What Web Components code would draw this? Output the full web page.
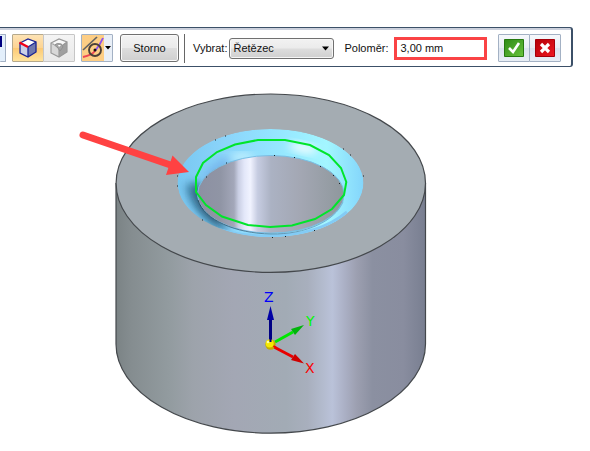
<!DOCTYPE html>
<html lang="cs">
<head>
<meta charset="utf-8">
<title>Zaoblení</title>
<style>
body{margin:0;background:#fff;font:11px "Liberation Sans",Arial,sans-serif;color:#111}
</style>
</head>
<body>
<cad-app></cad-app>
<script>
function define(name, html) {
  const t = document.createElement('template');
  t.innerHTML = html;
  customElements.define(name, class extends HTMLElement {
    constructor() {
      super();
      this.attachShadow({mode: 'open'}).append(t.content.cloneNode(true));
    }
  });
}

customElements.define('tool-button', class extends HTMLElement {
  connectedCallback() {
    if (this.shadowRoot) return;
    this.attachShadow({mode: 'open'}).innerHTML = `
    <style>
    :host{display:block;flex:none}
    button{box-sizing:border-box;width:32px;height:28px;padding:0;display:flex;align-items:center;justify-content:center;
      border:1px solid #a3b1c4;border-radius:1px;background:linear-gradient(#f6f8fb,#e9eef5 50%,#dce4ee 52%,#e8eef5);font:inherit;color:inherit}
    :host([kind=active]) button{border-color:#b5a98c;background:linear-gradient(#fde3b5,#fdd493 48%,#fcca76 52%,#ffe49e)}
    :host([kind=off]) button{border-color:#c6c6c6;background:linear-gradient(#f4f4f4,#e9e9e9)}
    :host([kind=split]) button{background:linear-gradient(90deg,#fdce85 22px,#e9eff7 22px)}
    :host([kind=cut]) button{width:6px;border-left:0;overflow:hidden;background:#e3effb;justify-content:flex-start;align-items:flex-start}
    :host([kind=text]) button{width:59px;border:1px solid #707070;border-radius:3px;box-shadow:inset 0 0 0 1px #fafafa;background:linear-gradient(#f3f3f3,#ebebeb 48%,#dddddd 52%,#cfcfcf)}
    </style><button type="button"><slot></slot></button>`;
    const label = this.getAttribute('label');
    if (label) this.shadowRoot.querySelector('button').setAttribute('aria-label', label);
  }
});

define('pick-list', `
<style>
:host{display:flex;align-items:center;gap:2px;flex:none}
.box{position:relative;display:block}
select{appearance:none;box-sizing:border-box;display:block;width:105px;height:21px;margin:0;padding:0 16px 0 3px;border:1px solid #707070;border-radius:3px;
 background:linear-gradient(#f2f2f2,#ebebeb 48%,#dddddd 52%,#cfcfcf);box-shadow:inset 0 0 0 1px #f6f6f6;font:inherit;color:inherit}
svg{position:absolute;right:5px;top:8px;pointer-events:none}
</style>
<label for="s">Vybrat:</label>
<span class="box"><select id="s"><option>Řetězec</option></select>
<svg width="7" height="5"><path d="M0 0.5h7L3.5 4.5z" fill="#000"/></svg></span>`);

define('radius-field', `
<style>
:host{display:flex;align-items:center;gap:6px;flex:none}
input{box-sizing:border-box;width:93px;height:23px;margin:0;padding:0 3px;border:3px solid #fa4345;background:#fff;font:inherit;color:inherit}
</style>
<label for="r">Poloměr:</label><input id="r" type="text" value="3,00 mm">`);

define('command-bar', `
<style>
:host{display:flex;align-items:center;box-sizing:border-box;height:40px;margin:27px 17px 0 0;padding-top:2px;
 border:solid #3c5068;border-width:1px 2px 1px 0;border-radius:0 3px 3px 0;background:linear-gradient(#cbd0dc 2px,#fff 2px)}
.group{display:flex;margin-left:6px}
.group + .group{margin-left:6px}
.storno{margin-left:7px}
hr{width:1px;height:29px;border:0;margin:0 8px 0 5px;background:#666;flex:none}
radius-field{margin-left:10px}
.end{margin-left:auto;margin-right:10px}
.group tool-button + tool-button{margin-left:-1px}
</style>
<tool-button kind="cut" label="Předchozí krok"><svg width="2" height="12"><path d="M0 1h2v11H0z" fill="#000080"/></svg></tool-button>
<div class="group">
<tool-button kind="active" label="Výběr hran"><svg width="20" height="22" viewBox="0 0 20 22">
 <path d="M2 6 10 2l8 3-7 5z" fill="#fff"/><path d="M2 6v10l8 4V10z" fill="#cbd1e8"/><path d="M10 10l8-5v10l-8 5z" fill="#7079ae"/>
 <path d="M2 6l8-4 8 3v10l-8 5-8-4zM10 10v10M10 10l8-5" fill="none" stroke="#1a2494" stroke-width="1.3"/><path d="M1.500 5.500 10 10" stroke="#f00018" stroke-width="2.400"/></svg></tool-button>
<tool-button kind="off" label="Parametry zaoblení"><svg width="20" height="22" viewBox="0 0 20 22">
 <path d="M2 6l8-4 8 3-7 5z" fill="#f8f8f8"/><path d="M2 6v10l8 4V10z" fill="#d8d8d8"/><path d="M10 10l8-5v10l-8 5z" fill="#a0a0a0"/>
 <path d="M2 6l8-4 8 3v10l-8 5-8-4zM10 12v8M14 8l4-3M2 6l3 1.500" fill="none" stroke="#999" stroke-width="1.200"/><path d="M5.500 8q2-2.500 7-1l1.500 3-3 4-2-3z" fill="#a4a4a4" stroke="#909090"/><path d="M9 8h3l-2 2z" fill="#fff"/></svg></tool-button>
</div>
<div class="group">
<tool-button kind="split" label="Tečné hrany"><svg width="30" height="26" viewBox="0 0 30 26">
 <path d="M1 15 15 2" stroke="#626262" stroke-width="1.700"/><path d="M1 22Q10 20 13 16" fill="none" stroke="#ee4654" stroke-width="1.900"/><path d="M13 16Q18 10 21 3" fill="none" stroke="#8c50ef" stroke-width="1.900"/>
 <circle cx="13" cy="15" r="6" fill="none" stroke="#4b4038" stroke-width="1.900"/><circle cx="13" cy="15" r="1.500" fill="#111"/><path d="M23 11h6l-3 3.500z" fill="#000"/></svg></tool-button>
</div>
<tool-button class="storno" kind="text">Storno</tool-button>
<hr>
<pick-list></pick-list>
<radius-field></radius-field>
<div class="group end">
<tool-button label="Přijmout"><svg width="20" height="18" viewBox="0 0 20 18"><defs><linearGradient id="g" x2="1" y2="1"><stop stop-color="#2e8b16"/><stop offset="1" stop-color="#69c33c"/></linearGradient></defs>
 <path d="M.5.5h19v17H.5z" fill="url(#g)" stroke="#26790f"/><path d="M5 9l4 4 6-9" fill="none" stroke="#fff" stroke-width="2.600"/></svg></tool-button>
<tool-button label="Zrušit"><svg width="20" height="18" viewBox="0 0 20 18"><defs><linearGradient id="r" x2="1" y2="1"><stop stop-color="#b30008"/><stop offset="1" stop-color="#f01820"/></linearGradient></defs>
 <path d="M.5.5h19v17H.5z" fill="url(#r)" stroke="#a5000a"/><path d="M6 5l8 8M14 5l-8 8" stroke="#fff" stroke-width="3.200"/></svg></tool-button>
</div>`);

define('model-view', `
<style>
:host{display:block}
svg{display:block;width:100%}
text{font:14px "DejaVu Sans",sans-serif}
</style>
<svg viewBox="0 67 590 384" role="img" aria-label="Model válce s otvorem">
<defs>
<linearGradient id="body" gradientUnits="userSpaceOnUse" x1="116" x2="425">
 <stop stop-color="#7b8385"/><stop offset=".05" stop-color="#858d90"/><stop offset=".17" stop-color="#929b9f"/><stop offset=".25" stop-color="#9da3ab"/>
 <stop offset=".38" stop-color="#a3a7b4"/><stop offset=".55" stop-color="#a2abb5"/><stop offset=".62" stop-color="#a8afbd"/><stop offset=".67" stop-color="#b3bbce"/><stop offset=".7" stop-color="#bac2d9"/>
 <stop offset=".74" stop-color="#abb0c5"/><stop offset=".78" stop-color="#9c9fb0"/><stop offset=".83" stop-color="#8b90a1"/><stop offset=".93" stop-color="#898d9f"/><stop offset="1" stop-color="#797f91"/></linearGradient>
<linearGradient id="hole" gradientUnits="userSpaceOnUse" x1="197" x2="345">
 <stop stop-color="#8c90a2"/><stop offset=".16" stop-color="#9095a5"/><stop offset=".25" stop-color="#a3a7b9"/><stop offset=".28" stop-color="#c9cee3"/><stop offset=".32" stop-color="#e3e7f9"/><stop offset=".36" stop-color="#f1f3ff"/><stop offset=".41" stop-color="#c6cce1"/>
 <stop offset=".5" stop-color="#abb2c3"/><stop offset=".7" stop-color="#a3a7b3"/><stop offset="1" stop-color="#8e979c"/></linearGradient>
<linearGradient id="blue" gradientUnits="userSpaceOnUse" x1="178" x2="364">
 <stop stop-color="#78c8f2"/><stop offset=".25" stop-color="#8bd4fa"/><stop offset=".5" stop-color="#93e4ff"/><stop offset=".8" stop-color="#a3f6ff"/><stop offset="1" stop-color="#83d5fb"/></linearGradient>
<linearGradient id="lip" gradientUnits="userSpaceOnUse" x1="197" x2="345">
 <stop stop-color="#2c4c60"/><stop offset=".35" stop-color="#55839f"/><stop offset="1" stop-color="#7cb9da"/></linearGradient>
<filter id="soft" x="-40%" y="-40%" width="180%" height="180%"><feGaussianBlur stdDeviation="4"/></filter>
<clipPath id="ring"><ellipse cx="270.500" cy="183" rx="93" ry="54"/></clipPath>
</defs>
<path d="M116 183V344A154.500 89 0 0 0 425.500 344V183" fill="url(#body)" stroke="#44484c" stroke-width="1.200"/>
<ellipse cx="270.800" cy="183.200" rx="154.700" ry="89.200" fill="#a4acb2" stroke="#44484c" stroke-width="1.200"/>
<g clip-path="url(#ring)">
 <ellipse cx="270.500" cy="183" rx="93" ry="54" fill="url(#blue)"/>
 <path d="M188 184Q194 213 228 230" fill="none" stroke="#4987ad" stroke-width="7" filter="url(#soft)"/>
 <path d="M196 184Q197 206 222 222" fill="none" stroke="#17445e" stroke-width="8" filter="url(#soft)"/>
 <path d="M207 181Q213 168 229 162" fill="none" stroke="#75b4eb" stroke-width="10" filter="url(#soft)"/>
 <ellipse cx="303" cy="148" rx="14" ry="4" transform="rotate(12 303 148)" fill="#fff" filter="url(#soft)"/>
 <ellipse cx="242" cy="157" rx="12" ry="3" fill="#d8faff" filter="url(#soft)"/>
 <path d="M181 203Q200 236 271 236Q320 235 347 212" fill="none" stroke="#83cbf5" stroke-width="3"/>
</g>
<ellipse cx="270.800" cy="194.300" rx="73.300" ry="38.800" fill="url(#hole)" stroke="#78bfe5"/>
<path d="M198 200C204 220 236 233.500 271 234S335 221 343 202" fill="none" stroke="url(#lip)"/>
<path d="M215 140h1M225 136h1M343 149h1M350 155h1M363 176h1M206 177h1M226 163h1M274 155.500h1M294 157.500h1M320 166.500h1M333 175.500h1M339 183.500h1M202 220h1M272 237.500h1M285 236.500h1M314 230.500h1M177 176h1M177 186h1" stroke="#17252b"/>
<path d="M196 192V177L203 163 217 152 235 144.500 258 140H285L310 145 329 155 341 168 346.300 182 344 195 332 209 315 219 292 225.500 270 227 248 225 222 216.500 206 205z" fill="none" stroke="#00e52b" stroke-width="2"/>
<path d="M83 135 172 165.500" stroke="#ff4242" stroke-width="7" stroke-linecap="round"/>
<path d="M172.500 155.500 189 172 166 175z" fill="#ff4242"/>
<path d="M270.500 343V318" stroke="#000084" stroke-width="3"/><path d="M270.500 306 274 320H267z" fill="#0000a5"/>
<path d="M275 342 293 332" stroke="#00e800" stroke-width="3"/><path d="M304 325 291 329 295 335z" fill="#00b50b"/>
<path d="M274 347 293 357" stroke="#e90000" stroke-width="3"/><path d="M304 363.500 295 354 291 360z" fill="#cf0000"/>
<circle cx="270.500" cy="344.500" r="5.200" fill="#c3ae00"/><circle cx="269.700" cy="343.500" r="4" fill="#f5ea00"/><circle cx="268" cy="342" r="1.300" fill="#ffffa0"/>
<path d="M270.500 337v5" stroke="#000084" stroke-width="2"/><path d="M273.500 346l3 2" stroke="#f00000" stroke-width="2"/>
<text x="264" y="302" fill="#0000fa">Z</text><text x="306" y="326" fill="#00fa00">Y</text><text x="305" y="373" fill="#fa0000">X</text>
</svg>`);

define('cad-app', `<style>:host{display:block}</style><command-bar></command-bar><model-view></model-view>`);
</script>
</body>
</html>
